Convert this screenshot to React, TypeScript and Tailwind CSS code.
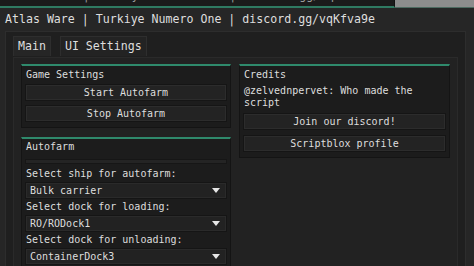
import React from "react";

const TEAL = "border-t-2 border-t-[#2f8a6c]";

function Button({ label }: { label: string }) {
  return (
    <div className="h-[17px] flex items-center justify-center bg-[#232323] border border-[#151515] shadow-[inset_0_0_0_1px_#2c2c2c] text-[10px] leading-[12px]">
      {label}
    </div>
  );
}

function Dropdown({ value }: { value: string }) {
  return (
    <div className="h-[17px] flex items-center justify-between pl-[4px] pr-[6px] bg-[#222] border border-[#151515] shadow-[inset_0_0_0_1px_#2a2a2a] text-[10px] leading-[12px]">
      <span>{value}</span>
      <svg width="8" height="5" viewBox="0 0 8 5">
        <path d="M0 0H8L4 5Z" fill="#e6e6e6" />
      </svg>
    </div>
  );
}

function Label({ text, first }: { text: string; first?: boolean }) {
  return (
    <div className={`px-[1px] ${first ? "pt-[4px] h-[18px]" : "pt-[2px] h-[16px]"} text-[10px] leading-[12px] whitespace-nowrap`}>
      {text}
    </div>
  );
}

export default function App() {
  return (
    <div className="w-[474px] h-[266px] overflow-hidden bg-[#262626] text-[#dedede] font-['DejaVu_Sans_Mono',monospace]">
      <div className="flex h-[8px]">
        <div className="w-[395px] bg-[#1b1b1b] border-b-2 border-[#2f7a62] border-r border-r-[#111] overflow-hidden">
          <div className="-mt-[12px] pl-[6px] text-[11.6px] leading-[14px] text-[#9a9a9a] whitespace-nowrap">
            Atlas Ware | Turkiye Numero One | discord.gg/vqKfva9e
          </div>
        </div>
        <div className="flex-1 bg-[#8d8d8d] border-b border-[#4d6b61]" />
      </div>
      <div className="h-[23px] pl-[5px] pt-[2px] text-[11.6px] leading-[18px] whitespace-nowrap">
        Atlas Ware | Turkiye Numero One | discord.gg/vqKfva9e
      </div>
      <div className="ml-[5px] w-[461px] h-[240px] bg-[#1f1f1f] border border-[#2d2d2d] border-b-0 pt-[4px] px-[7px]">
        <div className="flex gap-[9px]">
          <div className="h-[20px] px-[4px] bg-[#262626] border border-[#2e2e2e] border-b-0 text-[11.6px] leading-[19px]">
            Main
          </div>
          <div className="h-[20px] px-[4px] bg-[#232323] border border-[#2e2e2e] border-b-0 text-[11.6px] leading-[19px]">
            UI Settings
          </div>
        </div>
        <div className="h-[220px] bg-[#222] border border-[#2a2a2a] border-b-0 mt-[1px] pt-[6px] px-[7px] flex gap-[8px]">
          <div className="w-[211px] flex flex-col gap-[9px]">
            <div className={`bg-[#1c1c1c] border border-[#141414] ${TEAL} px-[3px] pt-[3px] pb-[5px]`}>
              <div className="px-[1px] text-[10px] leading-[12px] mb-[3px]">Game Settings</div>
              <div className="flex flex-col gap-[4px]">
                <Button label="Start Autofarm" />
                <Button label="Stop Autofarm" />
              </div>
            </div>
            <div className={`bg-[#1c1c1c] border border-[#141414] ${TEAL} px-[3px] pt-[2px] h-[140px]`}>
              <div className="px-[1px] text-[10px] leading-[12px]">Autofarm</div>
              <div className="h-[5px] mt-[6px] bg-[#242424] border border-[#161616]" />
              <div className="flex flex-col">
                <Label text="Select ship for autofarm:" first />
                <Dropdown value="Bulk carrier" />
                <Label text="Select dock for loading:" />
                <Dropdown value="RO/RODock1" />
                <Label text="Select dock for unloading:" />
                <Dropdown value="ContainerDock3" />
              </div>
            </div>
          </div>
          <div className="w-[212px]">
            <div className={`bg-[#1c1c1c] border border-[#141414] ${TEAL} px-[3px] pt-[3px] pb-[5px]`}>
              <div className="px-[1px] text-[10px] leading-[12px]">Credits</div>
              <div className="px-[1px] text-[10px] leading-[12px] mt-[4px] mb-[4px]">
                @zelvednpervet: Who made the
                <br />
                script
              </div>
              <div className="flex flex-col gap-[5px]">
                <Button label="Join our discord!" />
                <Button label="Scriptblox profile" />
              </div>
            </div>
          </div>
        </div>
      </div>
    </div>
  );
}
